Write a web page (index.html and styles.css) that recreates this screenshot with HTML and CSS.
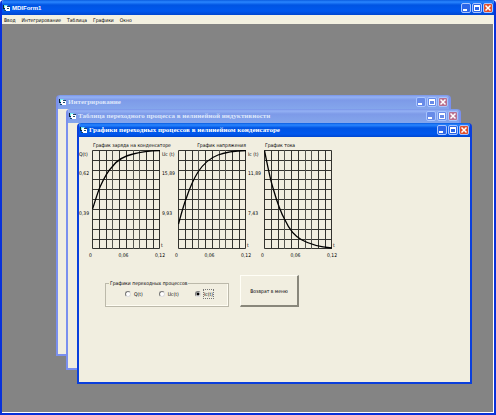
FILE: index.html
```html
<!DOCTYPE html>
<html lang="ru">
<head>
<meta charset="utf-8">
<title>MDIForm1</title>
<link rel="stylesheet" href="styles.css">
</head>
<body>
<svg class="defs" aria-hidden="true">
  <defs>
    <symbol id="form-icon" viewBox="0 0 8 8">
      <path d="M0 1h4v4H0z" fill="#123"/>
      <path d="M1 1h3l1 1v2H1z" fill="#7ee"/>
      <path d="M2 2h5v5H2z" fill="#fff"/>
      <path d="M4 2h3v1H4z" fill="#246"/>
      <path d="M4 4h2v1H4zM1 6h2v1H1z" fill="#164c70"/>
    </symbol>
    <symbol id="icon-min" viewBox="0 0 8 8"><path d="M1 5h4v2H1z" fill="#fff"/></symbol>
    <symbol id="icon-max" viewBox="0 0 8 8"><path d="M1 1h6v6H1zM2 3v3h4V3z" fill="#fff" fill-rule="evenodd"/></symbol>
    <symbol id="icon-close" viewBox="0 0 8 8"><path d="M1.5 1.5l5 5M6.500 1.500l-5 5" stroke="#fff" stroke-width="1.500"/></symbol>
    <g id="lattice">
      <path d="M.5 .5h67v98h-67zM7.500 0v99M14.500 0v99M27.500 0v99M34.500 0v99M54.500 0v99M61.500 0v99M0 10.500h68M0 20.500h68M0 29.500h68M0 39.500h68M0 49.500h68M0 59.500h68M0 69.500h68M0 79.500h68M0 89.500h68" fill="none" stroke="#33332f"/>
      <path d="M20.500 0v99M41.500 0v99M47.500 0v99" stroke="#55554f"/>
    </g>
  </defs>
</svg>
<div class="app">
  <header class="titlebar main-title">
    <svg class="form-icon"><use href="#form-icon"/></svg>
    <h1>MDIForm1</h1>
    <div class="controls">
      <button aria-label="Свернуть"><svg><use href="#icon-min"/></svg></button>
      <button aria-label="Развернуть"><svg><use href="#icon-max"/></svg></button>
      <button class="close" aria-label="Закрыть"><svg><use href="#icon-close"/></svg></button>
    </div>
  </header>
  <nav class="menu">
    <button>Ввод</button><button>Интегрирование</button><button>Таблица</button><button>Графики</button><button>Окно</button>
  </nav>
  <main class="desktop">
    <section class="window inactive first">
      <header class="titlebar">
        <svg class="form-icon"><use href="#form-icon"/></svg>
        <h2>Интегрирование</h2>
        <div class="controls">
          <button aria-label="Свернуть"><svg><use href="#icon-min"/></svg></button>
          <button aria-label="Развернуть"><svg><use href="#icon-max"/></svg></button>
          <button class="close" aria-label="Закрыть"><svg><use href="#icon-close"/></svg></button>
        </div>
      </header>
      <div class="client"></div>
    </section>
    <section class="window inactive second">
      <header class="titlebar">
        <svg class="form-icon"><use href="#form-icon"/></svg>
        <h2>Таблица переходного процесса в нелинейной индуктивности</h2>
        <div class="controls">
          <button aria-label="Свернуть"><svg><use href="#icon-min"/></svg></button>
          <button aria-label="Развернуть"><svg><use href="#icon-max"/></svg></button>
          <button class="close" aria-label="Закрыть"><svg><use href="#icon-close"/></svg></button>
        </div>
      </header>
      <div class="client"></div>
    </section>
    <section class="window third">
      <header class="titlebar">
        <svg class="form-icon"><use href="#form-icon"/></svg>
        <h2>Графики переходных процессов в нелинейном конденсаторе</h2>
        <div class="controls">
          <button aria-label="Свернуть"><svg><use href="#icon-min"/></svg></button>
          <button aria-label="Развернуть"><svg><use href="#icon-max"/></svg></button>
          <button class="close" aria-label="Закрыть"><svg><use href="#icon-close"/></svg></button>
        </div>
      </header>
      <div class="client">
        <div class="charts">
          <figure class="chart charge">
            <figcaption>График заряда на конденсаторе</figcaption>
            <div class="y-axis"><span>Q(t)</span><span>0,62</span><span>0,39</span></div>
            <svg class="plot" viewBox="0 0 68 99"><use href="#lattice"/><path class="curve" d="M.5 59C3 52 5 44 8 37C12 28 15 22 20 17C25 10 32 6 41 4C50 1.500 58 .7 68 .5"/></svg>
            <span class="t">t</span>
            <div class="x-axis"><span>0</span><span>0,06</span><span>0,12</span></div>
          </figure>
          <figure class="chart voltage">
            <figcaption>График напряжения</figcaption>
            <div class="y-axis"><span>Uc (t)</span><span>15,89</span><span>9,93</span></div>
            <svg class="plot" viewBox="0 0 68 99"><use href="#lattice"/><path class="curve" d="M.5 74C3 65 5 57 8 49C12 37 15 30 20 22C26 13 32 8 40 5C49 1.500 58 .7 68 .5"/></svg>
            <span class="t">t</span>
            <div class="x-axis"><span>0</span><span>0,06</span><span>0,12</span></div>
          </figure>
          <figure class="chart current">
            <figcaption>График тока</figcaption>
            <div class="y-axis"><span>Ic (t)</span><span>11,89</span><span>7,43</span></div>
            <svg class="plot" viewBox="0 0 68 99"><use href="#lattice"/><path class="curve" d="M.5 .5C3 13 6 29 9 38C13 52 17 63 21 70C26 81 32 87 38 90C47 95 57 97 68 98"/></svg>
            <span class="t">t</span>
            <div class="x-axis"><span>0</span><span>0,06</span><span>0,12</span></div>
          </figure>
        </div>
        <form class="form">
          <fieldset>
            <legend>Графики переходных процессов</legend>
            <div class="options">
              <label><input type="radio" name="plot"><span>Q(t)</span></label>
              <label><input type="radio" name="plot"><span>Uc(t)</span></label>
              <label><input type="radio" name="plot" checked><span>Ic(t)</span></label>
            </div>
          </fieldset>
          <button type="button" class="back">Возврат в меню</button>
        </form>
      </div>
    </section>
  </main>
</div>
</body>
</html>
```
FILE: styles.css
```css
* { box-sizing: border-box; }
body {
  margin: 0;
  background: #fff;
  color: #000;
  font: 5px/8px "DejaVu Sans Condensed", "Liberation Sans", sans-serif;
}
button { font: inherit; color: inherit; margin: 0; padding: 0; border: 0; background: none; }
h1, h2, figure { margin: 0; }
svg { display: block; }
.defs { position: absolute; width: 0; height: 0; }

.app {
  min-height: 100vh;
  display: flex;
  flex-direction: column;
  border: 2px solid #0831d9;
  border-top: 0;
  border-radius: 4px 4px 0 0;
  overflow: hidden;
}
.titlebar {
  display: flex;
  align-items: center;
  gap: 1px;
  height: 14px;
  padding: 0 1px 0 1px;
  color: #fff;
  background: linear-gradient(#0a5ce0, #2a86ff 2px, #0054e3 5px, #0058ee 11px, #0046d0);
}
.titlebar h1 { font: bold 6px/8px "Liberation Sans", Arial, sans-serif; }
.titlebar h2 { font: bold 7px/8px "Liberation Serif", "Times New Roman", serif; white-space: nowrap; }
.main-title { height: 15px; }
.form-icon { width: 8px; height: 8px; flex: none; }
.controls { display: flex; gap: 1px; margin-left: auto; }
.controls button {
  width: 10px;
  height: 10px;
  border: 1px solid #a9c5ff;
  border-radius: 2px;
  background: #2c66e8;
}
.controls svg { width: 8px; height: 8px; }
.controls .close { background: #e2502c; }

.menu {
  display: flex;
  gap: 6px;
  height: 9px;
  padding: 0 2px;
  background: #f3f0e0;
}
.desktop { position: relative; flex: 1; background: #848484; border: solid #fff; border-width: 0 1px 1px 0; }

.window {
  position: absolute;
  width: 395px;
  height: 261px;
  display: flex;
  flex-direction: column;
  border: 2px solid #0a3fdc;
  border-top: 0;
  border-radius: 4px 4px 0 0;
  overflow: hidden;
}
.first { left: 54px; top: 71px; }
.second { left: 64px; top: 85px; }
.third { left: 75px; top: 99px; }
.inactive { border-color: #7b90ee; }
.inactive .titlebar { color: #dce6fb; background: linear-gradient(#7894e8, #94b1f4 2px, #7d9ae8 5px, #84a6ec); }
.inactive .controls button { background: #688be8; }
.inactive .controls .close { background: #b87090; }
.client { flex: 1; background: #f1eee0; }

.charts { display: flex; padding-top: 4px; }
.chart {
  display: grid;
  grid-template-columns: 13px 68px 2px;
  grid-template-rows: 9px 99px 12px;
}
.voltage, .current { grid-template-columns: 16px 68px 2px; }
figcaption { grid-column: 2; white-space: nowrap; padding-left: 1px; }
.voltage figcaption { justify-self: end; }
.y-axis { grid-row: 2; grid-column: 1; display: grid; grid-template-rows: 19px 40px 10px; white-space: nowrap; }
.plot { grid-row: 2; grid-column: 2; width: 68px; height: 99px; }
.curve { fill: none; stroke: #000; stroke-width: 1.3; }
.t { grid-row: 2; grid-column: 3; align-self: end; padding-left: 1px; }
.x-axis {
  grid-row: 3;
  grid-column: 1 / -1;
  display: flex;
  justify-content: space-between;
  align-items: center;
  padding-left: 13px;
  margin-right: -3px;
}
.charge .x-axis { padding-left: 10px; }

.form { display: flex; align-items: flex-end; gap: 11px; padding: 14px 26px 0; }
fieldset {
  width: 124px;
  height: 28px;
  margin: 0;
  padding: 0;
  border: 1px solid #bcb9aa;
  box-shadow: inset -1px -1px #fffdf3;
}
legend { margin-left: 3px; padding: 0 1px; white-space: nowrap; }
.options { display: flex; gap: 16px; padding: 3px 0 0 19px; }
.options label { display: flex; align-items: center; gap: 3px; }
.options input {
  appearance: none;
  width: 6px;
  height: 6px;
  margin: 0;
  border: 1px solid;
  border-color: #777 #ddd #ddd #777;
  border-radius: 50%;
  background: #fff;
}
.options input:checked { background: radial-gradient(circle, #000 1px, #fff 2px); }
.options input:checked + span { outline: 1px dotted #777; }
.back {
  width: 59px;
  height: 32px;
  border: solid;
  border-width: 1px 2px 2px 1px;
  border-color: #fffef6 #89877b #89877b #fffef6;
  background: #f1eee0;
}
```
